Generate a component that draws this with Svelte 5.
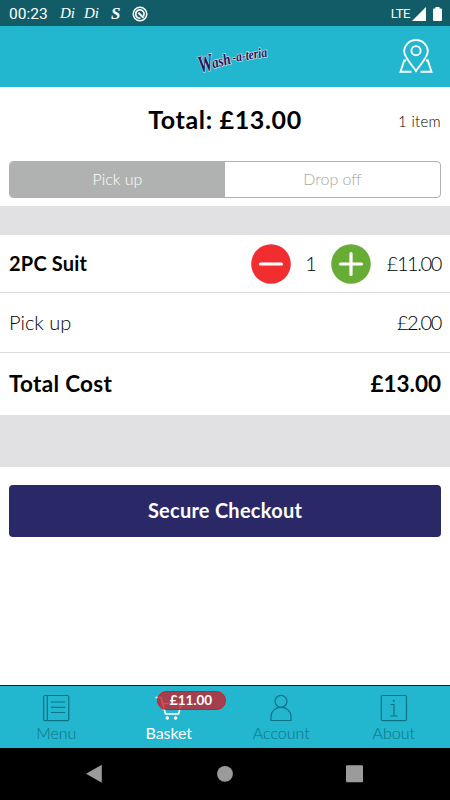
<script lang="ts">
  type Method = 'pickup' | 'dropoff';

  let method = $state<Method>('pickup');
  let quantity = $state(1);
  let activeTab = $state('Basket');

  const unitPrice = 11;
  const tabs = ['Menu', 'Basket', 'Account', 'About'];

  let subtotal = $derived(quantity * unitPrice);
  let delivery = $derived(method === 'pickup' ? 2 : 0);
  let total = $derived(subtotal + delivery);

  function price(value: number): string {
    return '£' + value.toFixed(2);
  }
</script>

<div class="screen">
  <div class="status-bar">
    <span class="clock">00:23</span>
    <span class="notice di">Di</span>
    <span class="notice di">Di</span>
    <span class="notice swirl">S</span>
    <svg class="notice-ring" width="16" height="16" viewBox="0 0 16 16" fill="none" stroke="#fff">
      <circle cx="8" cy="8" r="6.8" stroke-width="1.5" />
      <path d="M11.5 10.2A4.2 4.2 0 1 0 8.4 12.2" stroke-width="1.7" />
      <path d="M6.3 6.8L11.6 11.8" stroke-width="2" />
    </svg>
    <span class="network">LTE</span>
    <svg width="14" height="14" viewBox="0 0 14 14"><path d="M14 0V14H0Z" fill="#fff" /></svg>
    <svg class="battery" width="9" height="14" viewBox="0 0 9 14">
      <path d="M2.5 0H6.5V1.4H8a1 1 0 0 1 1 1V13a1 1 0 0 1-1 1H1a1 1 0 0 1-1-1V2.4a1 1 0 0 1 1-1H2.5Z" fill="#fff" />
    </svg>
  </div>

  <header class="header">
    <svg class="logo" width="90" height="56" viewBox="0 0 90 56">
      <g transform="rotate(-15 12 44)">
        <text class="logo-text" x="12" y="44" font-size="24" textLength="15" lengthAdjust="spacingAndGlyphs">W</text>
        <text class="logo-text" x="26" y="43" font-size="16" textLength="19" lengthAdjust="spacingAndGlyphs">ash</text>
      </g>
      <g transform="rotate(-9 45 33)">
        <text class="logo-text" x="45" y="33" font-size="14" textLength="35" lengthAdjust="spacingAndGlyphs">-a-teria</text>
      </g>
    </svg>
    <button class="map-button" aria-label="Store locations">
      <svg width="34" height="35" viewBox="0 0 34 35" fill="none" stroke="#fff" stroke-width="1.9">
        <path d="M17 32C13.5 26.5 5.2 18.5 5.2 12.6a11.8 11.6 0 0 1 23.6 0C28.8 18.5 20.5 26.5 17 32Z" />
        <circle cx="17" cy="11.7" r="4.6" />
        <path d="M7 21.5H5.2L1.5 32.7H12.5M27 21.5H28.8L32.5 32.7H21.5" />
      </svg>
    </button>
  </header>

  <section class="summary">
    <div class="summary-line">
      <h1>Total: {price(total)}</h1>
      <span class="count">{quantity} item{quantity === 1 ? '' : 's'}</span>
    </div>
    <div class="segmented">
      <button class:selected={method === 'pickup'} onclick={() => (method = 'pickup')}>Pick up</button>
      <button class:selected={method === 'dropoff'} onclick={() => (method = 'dropoff')}>Drop off</button>
    </div>
  </section>

  <section class="lines">
    <div class="line item">
      <span class="name">2PC Suit</span>
      <button class="step" aria-label="Remove one" onclick={() => (quantity = Math.max(1, quantity - 1))}>
        <svg width="40" height="40" viewBox="0 0 40 40">
          <circle cx="20" cy="20" r="19.8" fill="#f22d30" />
          <path d="M9.5 20H30.5" stroke="#fff" stroke-width="3.2" stroke-linecap="round" />
        </svg>
      </button>
      <span class="quantity">{quantity}</span>
      <button class="step" aria-label="Add one" onclick={() => (quantity += 1)}>
        <svg width="40" height="40" viewBox="0 0 40 40">
          <circle cx="20" cy="20" r="19.8" fill="#67ad35" />
          <path d="M9.5 20H30.5M20 9.5V30.5" stroke="#fff" stroke-width="3.2" stroke-linecap="round" />
        </svg>
      </button>
      <span class="amount">{price(subtotal)}</span>
    </div>
    <div class="line fee">
      <span class="name">{method === 'pickup' ? 'Pick up' : 'Drop off'}</span>
      <span class="amount">{price(delivery)}</span>
    </div>
    <div class="line total">
      <span class="name">Total Cost</span>
      <span class="amount">{price(total)}</span>
    </div>
  </section>

  <main class="actions">
    <button class="checkout">Secure Checkout</button>
  </main>

  <nav class="tabs">
    {#each tabs as tab}
      <button class="tab" class:active={activeTab === tab} onclick={() => (activeTab = tab)}>
        <svg width="28" height="28" viewBox="0 0 28 28" fill="none" stroke="currentColor" stroke-width="1.2">
          {#if tab === 'Menu'}
            <rect x="1.6" y="1.5" width="25.2" height="25.2" rx="1.5" />
            <path d="M5.3 1.5V26.7M9 8H23M9 13.3H23M9 18.5H23" />
          {:else if tab === 'Basket'}
            <path d="M0.5 3.5H6L10.5 20H23.5L26.5 9.5H8" stroke-width="1.7" />
            <circle cx="12.3" cy="24" r="1.8" fill="currentColor" stroke="none" />
            <circle cx="20.6" cy="24" r="1.8" fill="currentColor" stroke="none" />
          {:else if tab === 'Account'}
            <circle cx="14" cy="7.3" r="6" />
            <path d="M4 26.5V22.5a10 9.3 0 0 1 20 0V26.5Z" />
          {:else}
            <rect x="1.3" y="1.5" width="25.2" height="25.2" rx="1.5" />
            <path d="M10.6 10.5H14V22M10.5 22H17.5" />
            <circle cx="13.7" cy="6.8" r="1.1" fill="currentColor" stroke="none" />
          {/if}
        </svg>
        <span class="label">{tab}</span>
        {#if tab === 'Basket'}
          <span class="badge">{price(subtotal)}</span>
        {/if}
      </button>
    {/each}
  </nav>

  <div class="system-nav">
    <svg width="450" height="52" viewBox="0 0 450 52" fill="#9b9b9b">
      <path d="M86 25.7L101.8 16.8V34.7Z" />
      <circle cx="225" cy="25.8" r="7.9" />
      <rect x="346" y="17.2" width="17" height="17" rx="1" />
    </svg>
  </div>
</div>

<style>
  :global(body) {
    background: #fff;
  }

  .screen {
    display: flex;
    flex-direction: column;
    width: 450px;
    height: 800px;
    overflow: hidden;
    font-family: Lato, "Open Sans", sans-serif;
    font-weight: 300;
    color: #000;
  }

  button {
    margin: 0;
    padding: 0;
    border: none;
    background: none;
    font: inherit;
    color: inherit;
    cursor: pointer;
  }

  svg {
    display: block;
    flex-shrink: 0;
  }

  .status-bar {
    display: flex;
    align-items: center;
    height: 26px;
    box-sizing: border-box;
    padding: 1px 8px 0 9px;
    background: #125c67;
    color: #fff;
    font-family: Roboto, sans-serif;
    font-weight: 400;
  }

  .clock {
    width: 51px;
    font-size: 15.5px;
  }

  .notice {
    font-family: "Liberation Serif", serif;
    font-style: italic;
    font-size: 15px;
  }

  .di {
    width: 24px;
  }

  .swirl {
    width: 21px;
    padding-left: 3px;
    box-sizing: border-box;
    font-weight: 700;
    font-size: 17px;
  }

  .notice-ring {
    margin-left: 3px;
  }

  .network {
    margin-left: auto;
    margin-right: 2px;
    font-size: 13px;
    letter-spacing: -0.4px;
  }

  .battery {
    margin-left: 7px;
  }

  .header {
    display: grid;
    grid-template-columns: 1fr 90px 1fr;
    align-items: center;
    height: 61px;
    box-sizing: border-box;
    padding: 0 17px;
    background: #23b6cf;
  }

  .logo {
    grid-column: 2;
    margin-left: 8px;
  }

  .logo-text {
    font-family: "Liberation Serif", serif;
    font-style: italic;
    font-weight: 700;
    fill: #1d1a5c;
    stroke: #cfe3f0;
    stroke-width: 1.4px;
    paint-order: stroke;
  }

  .map-button {
    justify-self: end;
  }

  .summary {
    height: 119px;
    box-sizing: border-box;
    padding: 0 9px;
  }

  .summary-line {
    display: grid;
    grid-template-columns: 1fr auto 1fr;
    align-items: center;
    height: 74px;
    box-sizing: border-box;
    padding-bottom: 10px;
  }

  h1 {
    grid-column: 2;
    margin: 0;
    font-size: 25px;
    font-weight: 700;
    letter-spacing: 0.65px;
  }

  .count {
    justify-self: end;
    padding-top: 3px;
    font-size: 15px;
    letter-spacing: 0.3px;
  }

  .segmented {
    display: grid;
    grid-template-columns: 1fr 1fr;
    height: 37px;
    box-sizing: border-box;
    border: 1px solid #b0b2b1;
    border-radius: 4px;
    overflow: hidden;
    font-size: 16px;
  }

  .segmented button {
    padding-bottom: 2px;
    color: #a4a6a5;
  }

  .segmented .selected {
    background: #b0b2b1;
    color: #fff;
  }

  .lines {
    border-top: 29px solid #e1e1e3;
    border-bottom: 52px solid #e1e1e3;
  }

  .line {
    display: flex;
    align-items: center;
    box-sizing: border-box;
    height: 60px;
    padding: 0 9px;
    border-bottom: 1px solid #dcdcdc;
    font-size: 20px;
  }

  .line .name {
    flex: 1;
  }

  .line .name,
  .line .amount,
  .quantity {
    padding-bottom: 2px;
  }

  .item {
    height: 58px;
  }

  .item .name {
    font-weight: 700;
    letter-spacing: 0.2px;
  }

  .step {
    width: 40px;
    height: 40px;
  }

  .quantity {
    width: 40px;
    text-align: center;
  }

  /* last glyph's negative spacing is given back on the right */
  .item .amount,
  .fee .amount {
    margin-right: -1.4px;
    padding-right: 1.4px;
    letter-spacing: -1.4px;
  }

  .item .amount {
    width: 70px;
    text-align: right;
  }

  .total {
    height: 62px;
    border-bottom: none;
    font-size: 22.5px;
    font-weight: 700;
  }

  .total .name {
    letter-spacing: 0.3px;
  }

  .actions {
    flex: 1;
    padding: 18px 9px;
  }

  .checkout {
    width: 100%;
    height: 52px;
    padding-bottom: 2px;
    border-radius: 4px;
    background: #2b2868;
    color: #fff;
    font-size: 20px;
    font-weight: 700;
    letter-spacing: 0.25px;
  }

  .tabs {
    display: grid;
    grid-template-columns: repeat(4, 1fr);
    height: 63px;
    box-sizing: border-box;
    border-top: 1px solid #15262a;
    background: #23b6cf;
  }

  .tab {
    position: relative;
    display: flex;
    flex-direction: column;
    align-items: center;
    padding-top: 8px;
    color: #0b7383;
    font-size: 16px;
    line-height: 22px;
  }

  .tab.active {
    color: #fff;
    font-weight: 400;
  }

  .active .label {
    letter-spacing: -0.1px;
  }

  .badge {
    position: absolute;
    top: 5px;
    left: 44px;
    width: 69px;
    height: 19px;
    box-sizing: border-box;
    border: 1px solid #c5202c;
    border-radius: 10px;
    background: rgba(196, 34, 44, 0.8);
    color: #fff;
    font-size: 13.5px;
    font-weight: 700;
    line-height: 16px;
    text-align: center;
  }

  .system-nav {
    height: 52px;
    background: #000;
  }
</style>
